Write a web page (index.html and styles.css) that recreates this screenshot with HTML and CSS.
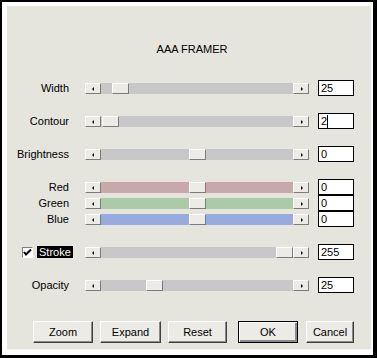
FILE: index.html
```html
<!DOCTYPE html>
<html>
<head>
<meta charset="utf-8">
<link rel="stylesheet" href="styles.css">
</head>
<body>
<div class="frame">
  <div class="dialog">
    <div class="title">AAA FRAMER</div>

    <div class="row r-width">
      <div class="label">Width</div>
      <div class="slider"><span class="arrow left"></span><span class="track"></span><span class="thumb" style="left:27px"></span><span class="arrow right"></span></div>
      <div class="field">25</div>
    </div>

    <div class="row r-gap">
      <div class="label">Contour</div>
      <div class="slider"><span class="arrow left"></span><span class="track"></span><span class="thumb" style="left:17px"></span><span class="arrow right"></span></div>
      <div class="field">2<span class="caret"></span></div>
    </div>

    <div class="row r-gap">
      <div class="label">Brightness</div>
      <div class="slider"><span class="arrow left"></span><span class="track"></span><span class="thumb" style="left:104px"></span><span class="arrow right"></span></div>
      <div class="field">0</div>
    </div>

    <div class="row r-gap">
      <div class="label">Red</div>
      <div class="slider"><span class="arrow left"></span><span class="track red"></span><span class="thumb" style="left:104px"></span><span class="arrow right"></span></div>
      <div class="field">0</div>
    </div>
    <div class="row">
      <div class="label">Green</div>
      <div class="slider"><span class="arrow left"></span><span class="track green"></span><span class="thumb" style="left:104px"></span><span class="arrow right"></span></div>
      <div class="field">0</div>
    </div>
    <div class="row">
      <div class="label">Blue</div>
      <div class="slider"><span class="arrow left"></span><span class="track blue"></span><span class="thumb" style="left:104px"></span><span class="arrow right"></span></div>
      <div class="field">0</div>
    </div>

    <div class="row r-gap">
      <div class="label check-label">
        <span class="checkbox"><svg width="9" height="9" viewBox="0 0 9 9"><path d="M1 4 L3 6.5 L8 1.5" fill="none" stroke="#000" stroke-width="2"/></svg></span>
        <span class="hl">Stroke</span>
      </div>
      <div class="slider"><span class="arrow left"></span><span class="track"></span><span class="thumb" style="left:191px"></span><span class="arrow right"></span></div>
      <div class="field">255</div>
    </div>

    <div class="row r-gap">
      <div class="label">Opacity</div>
      <div class="slider"><span class="arrow left"></span><span class="track"></span><span class="thumb" style="left:61px"></span><span class="arrow right"></span></div>
      <div class="field">25</div>
    </div>

    <div class="buttons">
      <button class="btn b-zoom">Zoom</button>
      <button class="btn b-expand">Expand</button>
      <button class="btn b-reset">Reset</button>
      <button class="btn b-ok">OK</button>
      <button class="btn b-cancel">Cancel</button>
    </div>
  </div>
</div>
</body>
</html>
```

FILE: styles.css
```css
* { box-sizing: border-box; }
html, body { margin: 0; padding: 0; background: #fff; }
body {
  width: 377px;
  height: 358px;
  font-family: "Liberation Sans", Arial, sans-serif;
  font-size: 11px;
  color: #000;
}
.frame {
  width: 377px;
  height: 358px;
  border-style: solid;
  border-color: #000;
  border-width: 2px 4px 3px 2px;
  background: #fff;
  padding: 4px 2px 5px 5px;
}
.dialog {
  width: 364px;
  height: 344px;
  background: #e5e4dd;
  border-bottom: 1px solid #f4f4f0;
  padding-top: 37px;
}
.title {
  text-align: center;
  line-height: 13px;
  height: 13px;
  padding-left: 6px;
  margin-bottom: 24px;
}
.row {
  display: flex;
  align-items: center;
  height: 16px;
}
.r-width { margin-top: 0; }
.r-gap { margin-top: 17px; }
.label {
  width: 78px;
  padding-right: 16px;
  text-align: right;
  line-height: 13px;
  white-space: nowrap;
}
.check-label {
  display: flex;
  align-items: center;
  padding-left: 15px;
  padding-right: 0;
  text-align: left;
}
.checkbox {
  width: 11px;
  height: 11px;
  background: #fff;
  border: 1px solid;
  border-color: #808080 #fff #fff #808080;
  display: flex;
  align-items: center;
  justify-content: center;
  margin-right: 4px;
}
.checkbox svg { display: block; }
.hl {
  background: #000;
  color: #fff;
  padding: 0 2px;
  line-height: 12px;
}
.slider {
  position: relative;
  width: 224px;
  height: 11px;
  display: flex;
}
.track {
  flex: 1;
  background: #c8c8c8;
}
.track.red { background: #c8a8a8; }
.track.green { background: #aacaa8; }
.track.blue { background: #98aadf; }
.arrow, .thumb {
  background: #ecebe6;
  border: 1px solid;
  border-color: #fff #7c7c7c #7c7c7c #fff;
  height: 11px;
}
.arrow {
  width: 16px;
  position: relative;
}
.arrow::after {
  content: "";
  position: absolute;
  top: 3px;
  left: 6px;
  border-top: 2px solid transparent;
  border-bottom: 2px solid transparent;
}
.arrow.left::after { border-right: 2px solid #000; }
.arrow.right::after { border-left: 2px solid #000; left: 7px; }
.thumb {
  position: absolute;
  top: 0;
  width: 17px;
}
.field {
  margin-left: 9px;
  width: 36px;
  height: 16px;
  background: #fff;
  border: 1px solid #000;
  padding-left: 2px;
  line-height: 14px;
  display: flex;
  align-items: center;
}
.caret {
  display: inline-block;
  width: 1px;
  height: 13px;
  background: #000;
  margin-left: 0;
}
.buttons {
  display: flex;
  margin-top: 28px;
  padding-left: 26px;
  gap: 7px;
}
.btn {
  font-family: "Liberation Sans", Arial, sans-serif;
  font-size: 11px;
  color: #000;
  height: 22px;
  padding: 0;
  background: #ecebe6;
  border: 1px solid;
  border-color: #fff #404040 #404040 #fff;
  box-shadow: inset -1px -1px #8a8a8a;
  border-radius: 0;
}
.b-zoom { width: 60px; }
.b-expand { width: 61px; }
.b-reset { width: 59px; }
.b-ok {
  width: 60px;
  margin-left: 4px;
  border-color: #000;
  box-shadow: inset 1px 1px #fff, inset -2px -2px #8a8a8a, inset -1px -1px #404040;
}
.b-cancel { width: 48px; margin-left: 1px; }
```
